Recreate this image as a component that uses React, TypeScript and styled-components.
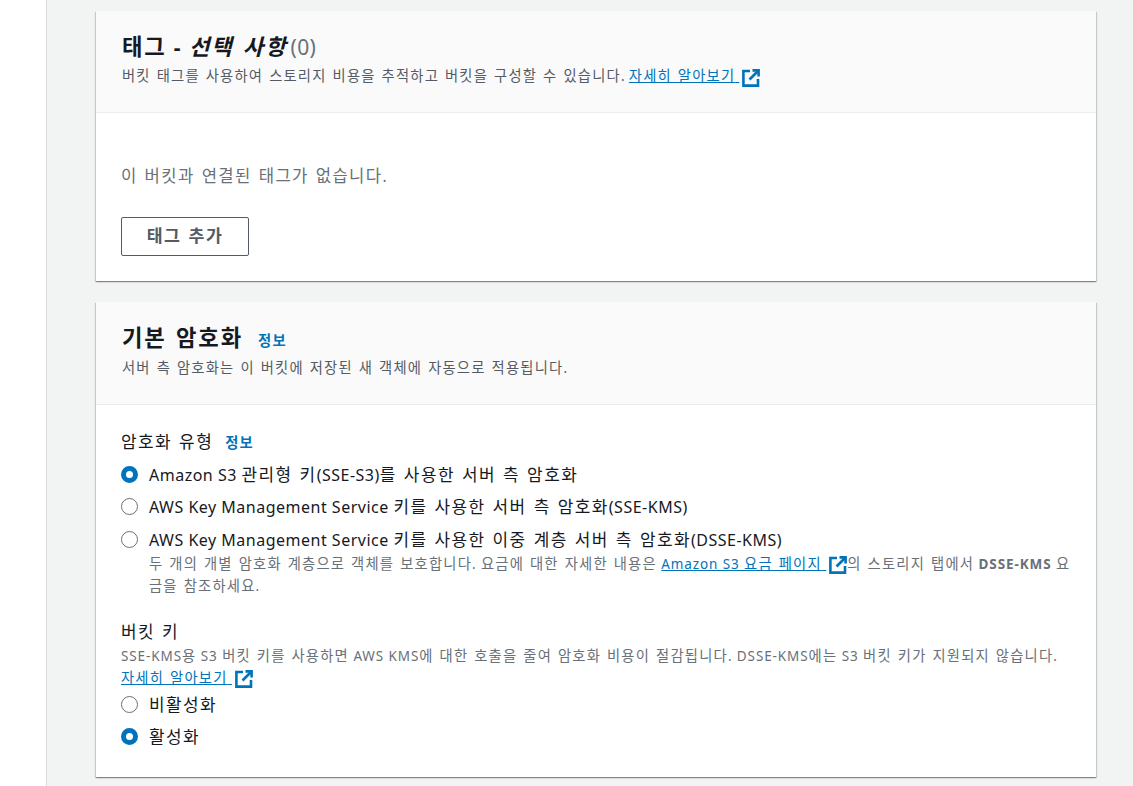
import { Fragment } from "react";
import styled, { createGlobalStyle } from "styled-components";

const GlobalStyle = createGlobalStyle`
  html, body {
    margin: 0;
    padding: 0;
    height: 786px;
    overflow: hidden;
    background: #ffffff;
    font-family: "Noto Sans", "Noto Sans CJK KR", sans-serif;
  }
  * {
    box-sizing: border-box;
  }
`;

const Page = styled.div`
  display: flex;
  height: 786px;
`;

const SideNav = styled.div`
  width: 47px;
  flex: none;
  background: #ffffff;
  border-right: 1px solid #d5dbdb;
`;

const Main = styled.div`
  flex: 1;
  background: #f2f3f3;
  padding: 11px 37px 0 49px;
  display: flex;
  flex-direction: column;
  gap: 21px;
`;

const Card = styled.section`
  background: #ffffff;
  box-shadow: 0 1px 1px 0 rgba(0, 28, 36, 0.3), 1px 1px 1px 0 rgba(0, 28, 36, 0.15),
    -1px 1px 1px 0 rgba(0, 28, 36, 0.15);
`;

const CardHeader = styled.div<{ $height: number }>`
  height: ${(p) => p.$height}px;
  background: #fafafa;
  border-bottom: 1px solid #eaeded;
  padding: 19px 26px 0;
`;

const TitleRow = styled.div<{ $height: number }>`
  display: flex;
  align-items: baseline;
  gap: 15px;
  height: ${(p) => p.$height}px;
`;

const Title = styled.h2`
  margin: 0;
  font-size: 21px;
  line-height: 34px;
  font-weight: 700;
  letter-spacing: 1.5px;
  color: #16191f;
`;

const Optional = styled.em`
  font-style: italic;
`;

const Count = styled.span`
  margin-left: -4px;
  font-weight: 400;
  letter-spacing: 0.3px;
  color: #687078;
`;

// 한글 구간은 원본 폰트보다 자폭이 좁아서 따로 넓혀 준다
const Ko = styled.span`
  font-size: 1.06em;
  letter-spacing: 0.085em;
  word-spacing: 0.07em;
`;

const Description = styled.p`
  margin: 0;
  font-size: 13.5px;
  line-height: 17px;
  letter-spacing: 0.4px;
  color: #545b64;
`;

const TextLink = styled.a`
  color: #0073bb;
  text-decoration: underline;
`;

const InfoLink = styled.a`
  color: #0073bb;
  font-size: 13.5px;
  font-weight: 700;
`;

const ExternalSvg = styled.svg`
  width: 18px;
  height: 18px;
  vertical-align: -1.5px;
  margin: -4px 0 -4px 3px;
`;

const ExternalIcon = () => (
  <ExternalSvg viewBox="0 0 18 18" fill="none" stroke="#0073bb" strokeWidth="2.6">
    <path d="M8 2H1.4v14.6H16V10" />
    <path d="M7.5 10.5 16 2" />
    <path d="M10.5 1.4h6.1v6.1" />
  </ExternalSvg>
);

const TagsBody = styled.div`
  padding: 50px 25px 0;
  height: 168px;
`;

const EmptyText = styled.p`
  margin: 0 0 28px;
  font-size: 15.7px;
  line-height: 26px;
  color: #687078;
`;

const OutlineButton = styled.button`
  display: block;
  width: 128px;
  height: 39px;
  padding: 0 0 5px;
  background: #ffffff;
  border: 1px solid #545b64;
  border-radius: 2px;
  font-family: inherit;
  font-size: 16.3px;
  font-weight: 700;
  color: #545b64;
`;

const EncryptionBody = styled.div`
  padding: 24px 25px 0;
  height: 372px;
`;

const FieldLabel = styled.div<{ $top?: number }>`
  display: flex;
  align-items: baseline;
  gap: 12px;
  margin-top: ${(p) => p.$top ?? 0}px;
  font-size: 16px;
  line-height: 26px;
  color: #16191f;
`;

const RadioGroup = styled.div<{ $top: number; $gap: number }>`
  display: flex;
  flex-direction: column;
  gap: ${(p) => p.$gap}px;
  margin-top: ${(p) => p.$top}px;
`;

const RadioRow = styled.label`
  display: flex;
  align-items: center;
  gap: 11px;
  height: 26px;
  font-size: 16px;
  letter-spacing: 0.5px;
  color: #16191f;
`;

const RadioText = styled.span`
  padding-bottom: 2px;
`;

const RadioMark = styled.span<{ $checked?: boolean }>`
  width: 17px;
  height: 17px;
  flex: none;
  border-radius: 50%;
  background: #ffffff;
  border: ${(p) => (p.$checked ? "5px solid #0073bb" : "1.5px solid #687078")};
`;

const RadioHint = styled.p`
  margin: -6px 0 0 28px;
  font-size: 13.5px;
  line-height: 21px;
  letter-spacing: 0.9px;
  color: #687078;
`;

const BucketKeyHint = styled.p`
  margin: 0;
  font-size: 13.5px;
  line-height: 21px;
  letter-spacing: 0.9px;
  color: #687078;
`;

const Strong = styled.b`
  font-weight: 700;
`;

// 문자열을 한글 구간과 나머지로 나눠서 렌더링
const T = ({ children }: { children: string }) => (
  <>
    {children.split(/([가-힣]+(?: [가-힣]+)*)/).map((part, i) =>
      i % 2 === 1 ? <Ko key={i}>{part}</Ko> : <Fragment key={i}>{part}</Fragment>
    )}
  </>
);

export default function App() {
  return (
    <>
      <GlobalStyle />
      <Page>
        <SideNav />
        <Main>
          <Card>
            <CardHeader $height={102}>
              <TitleRow $height={37}>
                <Title>
                  <T>태그</T> - <Optional><T>선택 사항</T></Optional> <Count>(0)</Count>
                </Title>
              </TitleRow>
              <Description>
                <T>버킷 태그를 사용하여 스토리지 비용을 추적하고 버킷을 구성할 수 있습니다.</T>{" "}
                <TextLink><T>자세히 알아보기 </T></TextLink>
                <ExternalIcon />
              </Description>
            </CardHeader>
            <TagsBody>
              <EmptyText><T>이 버킷과 연결된 태그가 없습니다.</T></EmptyText>
              <OutlineButton><T>태그 추가</T></OutlineButton>
            </TagsBody>
          </Card>
          <Card>
            <CardHeader $height={103}>
              <TitleRow $height={38}>
                <Title><T>기본 암호화</T></Title>
                <InfoLink><T>정보</T></InfoLink>
              </TitleRow>
              <Description>
                <T>서버 측 암호화는 이 버킷에 저장된 새 객체에 자동으로 적용됩니다.</T>
              </Description>
            </CardHeader>
            <EncryptionBody>
              <FieldLabel>
                <span><T>암호화 유형</T></span>
                <InfoLink><T>정보</T></InfoLink>
              </FieldLabel>
              <RadioGroup $top={5} $gap={6.5}>
                <RadioRow>
                  <RadioMark $checked />
                  <RadioText><T>Amazon S3 관리형 키(SSE-S3)를 사용한 서버 측 암호화</T></RadioText>
                </RadioRow>
                <RadioRow>
                  <RadioMark />
                  <RadioText><T>AWS Key Management Service 키를 사용한 서버 측 암호화(SSE-KMS)</T></RadioText>
                </RadioRow>
                <RadioRow>
                  <RadioMark />
                  <RadioText><T>AWS Key Management Service 키를 사용한 이중 계층 서버 측 암호화(DSSE-KMS)</T></RadioText>
                </RadioRow>
                <RadioHint>
                  <T>두 개의 개별 암호화 계층으로 객체를 보호합니다. 요금에 대한 자세한 내용은</T>{" "}
                  <TextLink><T>Amazon S3 요금 페이지 </T></TextLink>
                  <ExternalIcon /><T>의 스토리지 탭에서</T> <Strong>DSSE-KMS</Strong> <T>요금을 참조하세요.</T>
                </RadioHint>
              </RadioGroup>
              <FieldLabel $top={22}><T>버킷 키</T></FieldLabel>
              <BucketKeyHint>
                <T>SSE-KMS용 S3 버킷 키를 사용하면 AWS KMS에 대한 호출을 줄여 암호화 비용이 절감됩니다. DSSE-KMS에는 S3 버킷 키가 지원되지 않습니다.</T>{" "}
                <TextLink><T>자세히 알아보기 </T></TextLink>
                <ExternalIcon />
              </BucketKeyHint>
              <RadioGroup $top={3} $gap={6}>
                <RadioRow>
                  <RadioMark />
                  <RadioText><T>비활성화</T></RadioText>
                </RadioRow>
                <RadioRow>
                  <RadioMark $checked />
                  <RadioText><T>활성화</T></RadioText>
                </RadioRow>
              </RadioGroup>
            </EncryptionBody>
          </Card>
        </Main>
      </Page>
    </>
  );
}
